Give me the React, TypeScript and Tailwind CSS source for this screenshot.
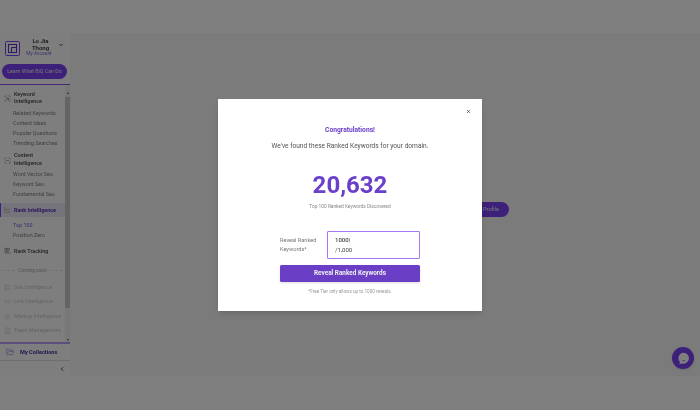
import React from 'react';
import {
  ChevronDown,
  ChevronLeft,
  FolderOpen,
  ScanSearch,
  ScanLine,
  ChartLine,
  ChartBarBig,
  LayoutList,
  Link2,
  Settings,
  Contact,
  X,
} from 'lucide-react';

const SubItem = ({ label, active }: { label: string; active?: boolean }) => (
  <div className={`h-[10.2px] pl-[13px] text-[5.4px] leading-[10.2px] ${active ? 'text-[#7e5bd6]' : 'text-[#808080]'}`}>{label}</div>
);

const SoonItem = ({ label, icon: Icon }: { label: string; icon: React.ElementType }) => (
  <div className="flex h-[14.5px] items-center gap-[3px] pl-[4px] text-[5.4px] text-[#cacaca]">
    <Icon size={7} strokeWidth={1.5} className="shrink-0" />
    <span className="whitespace-nowrap">{label}</span>
  </div>
);

const Sidebar = () => (
  <aside className="flex h-[343px] w-[70px] shrink-0 flex-col bg-[#fdfdfd]">
    <div className="flex h-[52px] shrink-0 flex-col border-b border-[#8a4ff0] px-[2px]">
      <div className="flex h-[31px] items-start pl-[3px] pt-[8px]">
        <div className="flex h-[15px] w-[15px] shrink-0 items-center justify-center rounded-[1.5px] border border-[#7e42ff]">
          <div className="relative h-[9px] w-[9px] border border-[#5a2fc0]">
            <div className="absolute bottom-0 right-0 h-[5px] w-[5px] border-l border-t border-[#5a2fc0]" />
          </div>
        </div>
        <div className="-mt-[3px] w-[38px] text-center leading-none">
          <div className="ml-[3px] text-[6px] font-medium leading-[6.6px] text-[#222]">
            Lo Jia
            <br />
            Thong
          </div>
          <div className="text-[4.8px] leading-[5.5px] text-[#7e5bd6]">My Account</div>
        </div>
        <ChevronDown size={6} strokeWidth={3} className="mt-[1px] text-[#222]" />
      </div>
      <button className="flex h-[15px] w-[65px] items-center justify-center rounded-full bg-[#7a40f2] text-[5.3px] text-[#ececec]">
        Learn What BiQ Can Do
      </button>
    </div>

    <div className="flex h-[257px] min-h-0">
      <nav className="min-w-0 flex-1 overflow-hidden pt-[5.5px]">
        <div className="flex items-center gap-[3px] pl-[4px]">
          <ScanSearch size={7} strokeWidth={1.5} className="shrink-0 text-[#555]" />
          <div className="text-[5.4px] font-medium leading-[7.6px] text-[#444]">
            Keyword
            <br />
            Intelligence
          </div>
        </div>
        <div className="pt-[2px]">
          <SubItem label="Related Keywords" />
          <SubItem label="Content Ideas" />
          <SubItem label="Popular Questions" />
          <SubItem label="Trending Searches" />
        </div>
        <div className="mt-[4px] flex items-center gap-[3px] pl-[4px]">
          <ScanLine size={7} strokeWidth={1.5} className="shrink-0 text-[#555]" />
          <div className="text-[5.4px] font-medium leading-[7.6px] text-[#444]">
            Content
            <br />
            Intelligence
          </div>
        </div>
        <div className="pt-[1px]">
          <SubItem label="Word Vector Seo" />
          <SubItem label="Keyword Seo" />
          <SubItem label="Fundamental Seo" />
        </div>
        <div className="mt-[3.5px] flex h-[14px] items-center gap-[3px] border-l border-[#7e42ff] bg-[#ece8f6] pl-[3px]">
          <ChartLine size={7} strokeWidth={1.5} className="shrink-0 text-[#777]" />
          <span className="whitespace-nowrap text-[5.4px] font-bold text-[#5a2fc0]">Rank Intelligence</span>
        </div>
        <div className="pt-[3.5px]">
          <SubItem label="Top 100" active />
          <SubItem label="Position Zero" />
        </div>
        <div className="mt-[5px] flex h-[10px] items-center gap-[3px] pl-[4px]">
          <ChartBarBig size={7} strokeWidth={1.5} className="shrink-0 text-[#555]" />
          <span className="text-[5.4px] font-medium text-[#444]">Rank Tracking</span>
        </div>
        <div className="mt-[11px] flex items-center gap-[3px] px-[2px] text-[4.8px] text-[#a8a8a8]">
          <div className="flex-1 border-t border-dashed border-[#e4e4e4]" />
          <span className="whitespace-nowrap">Coming soon</span>
          <div className="flex-1 border-t border-dashed border-[#e4e4e4]" />
        </div>
        <div className="pt-[6px]">
          <SoonItem label="Site Intelligence" icon={LayoutList} />
          <SoonItem label="Link Intelligence" icon={Link2} />
          <SoonItem label="Markup Intelligence" icon={Settings} />
          <SoonItem label="Team Management" icon={Contact} />
        </div>
      </nav>
      <div className="flex w-[5px] shrink-0 flex-col bg-[#f1f1f1]">
        <div className="h-[12px] shrink-0 pt-[7px]">
          <div className="mx-auto h-0 w-0 border-x-[1.5px] border-b-[2px] border-x-transparent border-b-[#555]" />
        </div>
        <div className="h-[211px] shrink-0 bg-[#c9c9c9]" />
        <div className="mt-auto pb-[1px]">
          <div className="mx-auto h-0 w-0 border-x-[1.5px] border-t-[2px] border-x-transparent border-t-[#555]" />
        </div>
      </div>
    </div>

    <div className="flex h-[19px] shrink-0 items-center gap-[6px] border-y border-t-2 border-y-[#b9a0f5] border-b-[#ddd] pl-[6px]">
      <FolderOpen size={8} strokeWidth={1.4} className="text-[#6b4bc4]" />
      <span className="text-[5.6px] font-bold text-[#4a2a9a]">My Collections</span>
    </div>
    <div className="flex flex-1 items-center justify-end pr-[5px]">
      <ChevronLeft size={6} strokeWidth={3} className="text-[#222]" />
    </div>
  </aside>
);

const Modal = () => (
  <div className="relative flex h-[212px] w-[264px] flex-col items-center bg-white shadow-md">
    <X size={5} strokeWidth={3} className="absolute right-[11px] top-[10px] text-[#333]" />
    <div className="mt-[27px] text-[6.7px] font-bold leading-[8px] text-[#6a3fc9]">Congratulations!</div>
    <div className="mt-[8px] text-[6.6px] leading-[8px] text-[#555]">We've found these Ranked Keywords for your domain.</div>
    <div className="mt-[20px] text-[24px] font-bold leading-[30px] text-[#6a3fc9]">20,632</div>
    <div className="mt-[4px] text-[4.8px] leading-[6px] text-[#888]">Top 100 Ranked Keywords Discovered</div>
    <div className="mt-[21px] flex w-[140px] items-center gap-[6px]">
      <div className="w-[41px] text-[5.6px] leading-[8.6px] text-[#777]">
        Reveal Ranked
        <br />
        Keywords*
      </div>
      <div className="flex h-[28px] flex-1 flex-col justify-center rounded-[1px] border-[1.5px] border-[#a578f5] pl-[7px] text-[6px] leading-[10px] text-[#444]">
        <div className="font-medium">
          1000<span className="font-normal">|</span>
        </div>
        <div>/1,000</div>
      </div>
    </div>
    <button className="mt-[6px] h-[17px] w-[140px] rounded-[1.5px] bg-[#6a3fc5] text-[6.4px] font-bold text-[#eee] shadow-sm">
      Reveal Ranked Keywords
    </button>
    <div className="mt-[7px] text-[4.6px] leading-[6px] text-[#999]">*Free Tier only allows up to 1000 reveals.</div>
  </div>
);

export default function App() {
  return (
    <div
      className="relative h-[410px] w-[700px] overflow-hidden bg-white blur-[0.4px]"
      style={{ fontFamily: 'Roboto, sans-serif' }}
    >
      <div className="h-[33px]" />
      <div className="flex h-[343px]">
        <Sidebar />
        <main className="relative flex flex-1 flex-col items-center bg-[#f7f7f8] pt-[169px]">
          <button className="flex h-[15px] w-[248px] items-center justify-end rounded-full bg-[#7a40f2] pr-[10px] text-[5.6px] text-[#eee]">
            Create Ranking Profile
          </button>
          <div className="absolute bottom-[7px] right-[6px] flex h-[22px] w-[22px] items-center justify-center rounded-full bg-[#7a40f2] shadow">
            <svg width="13" height="13" viewBox="0 0 12 12">
              <path d="M6 .8a5.2 5 0 1 1-1.6 9.8L2.2 11.2l.5-2A5 5 0 0 1 6 .8z" fill="#fff" />
              <path d="M5 8h2.4" stroke="#7a40f2" strokeWidth="0.7" />
            </svg>
          </div>
        </main>
      </div>
      <div className="absolute inset-0 flex justify-center bg-black/50 pt-[99px]">
        <Modal />
      </div>
    </div>
  );
}
